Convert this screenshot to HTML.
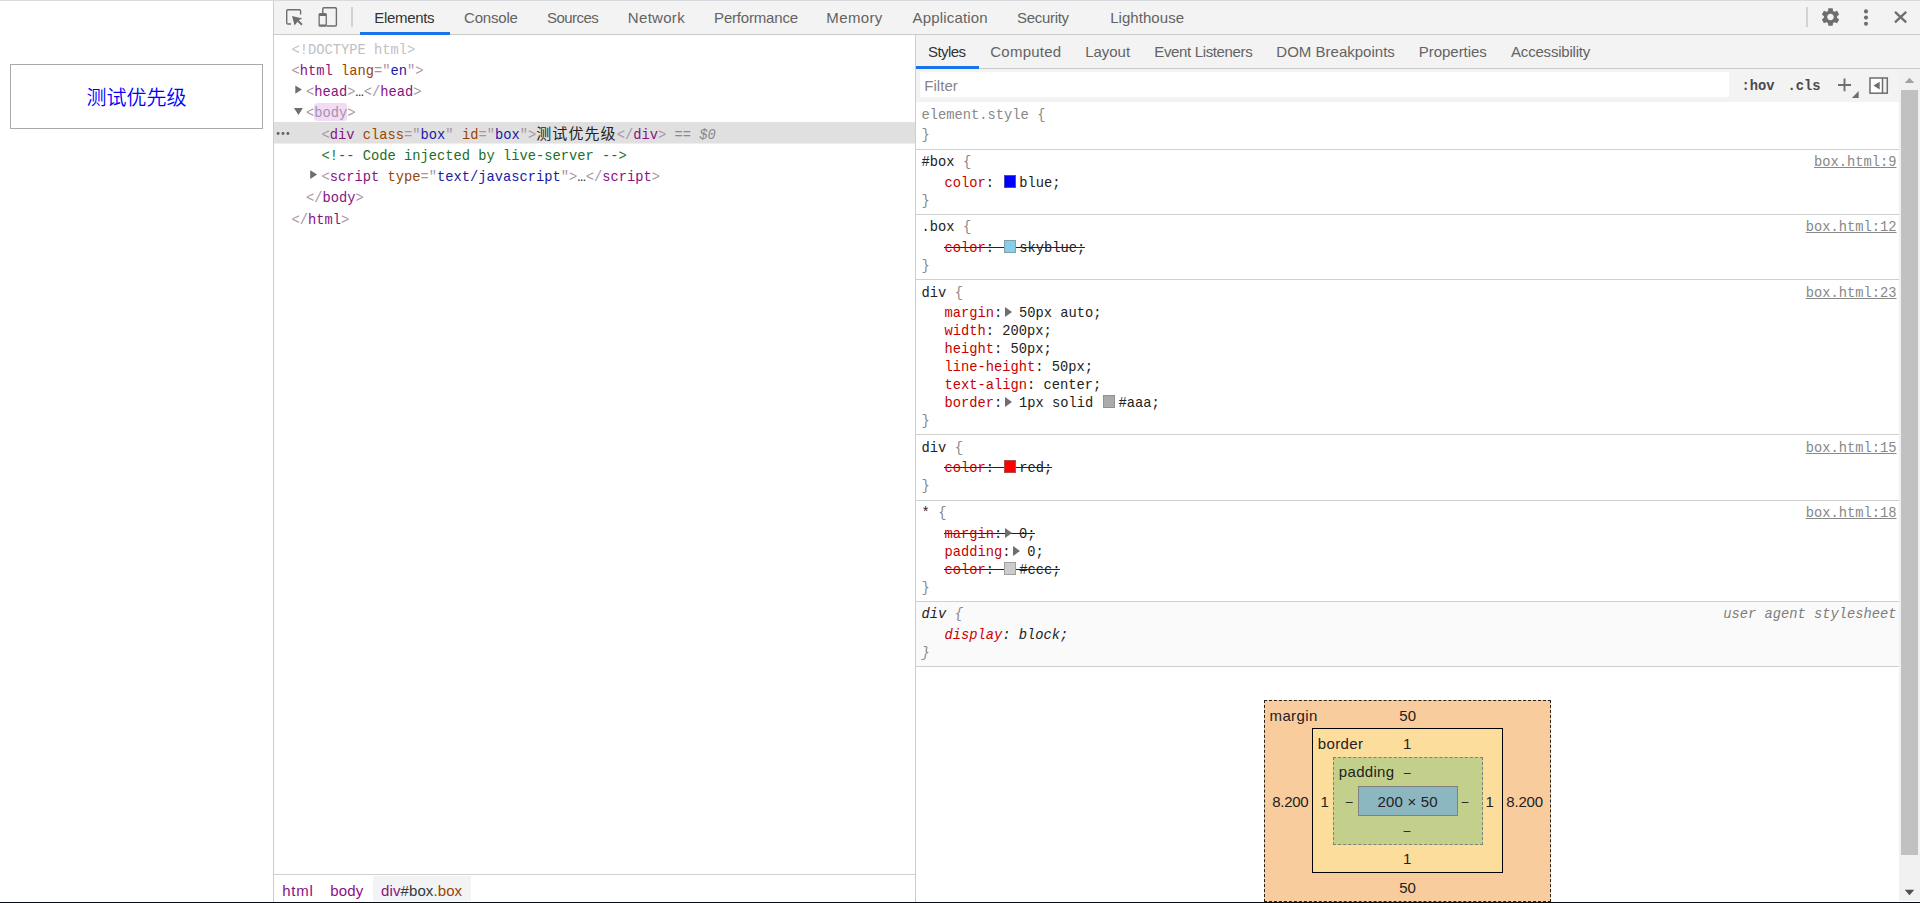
<!DOCTYPE html>
<html lang="en">
<head>
<meta charset="utf-8">
<title>box.html - DevTools</title>
<style>
html,body{margin:0;padding:0}
body{width:1920px;height:903px;overflow:hidden;background:#fff;position:relative;
 font-family:"Liberation Sans","Noto Sans CJK SC",sans-serif;font-size:15px;color:#333}
.a{position:absolute}
.bg{position:absolute}
/* sans labels */
.s{position:absolute;white-space:pre;line-height:21px;height:21px;font-size:15px;color:#636363}
/* mono text */
.m{position:absolute;white-space:pre;line-height:21px;height:21px;font-size:13.75px;
 font-family:"Liberation Mono","Noto Sans CJK SC",monospace;color:#222}
/* DOM tree colours */
.tg{color:#a894a6}.tn{color:#881280}.an{color:#994500}.av{color:#1a1aa6}
.cm{color:#236e25}.dt{color:#c0c0c0}.tx{color:#222}
/* styles pane colours */
.sel{color:#222}.br{color:#888}.pn{color:#c80000}.pv{color:#222}
.gr{color:#888}
.it{font-style:italic}
.cj{font-family:"Liberation Mono","Noto Sans CJK SC",monospace;font-size:15px;letter-spacing:1.1px;position:relative;top:0px}
.sw{display:inline-block;box-sizing:border-box;width:12px;height:13px;margin:0 3.15px 0 1.85px;
 vertical-align:-1px;border:1px solid rgba(128,128,128,.6)}
.hr{position:absolute;left:916px;width:983px;height:1px;background:#cfcfcf}
.ar{display:inline-block;width:8.5px;height:10px;position:relative}
.ar::before{content:"";position:absolute;left:2.85px;top:0;border-left:7px solid #6e6e6e;border-top:5.15px solid transparent;border-bottom:5.15px solid transparent}
.ov{background:linear-gradient(#222,#222) no-repeat 0 9px/100% 1px}
.lnk{position:absolute;white-space:pre;line-height:21px;height:21px;font-size:13.75px;
 font-family:"Liberation Mono",monospace;color:#888;text-decoration:underline;right:23.5px}
</style>
</head>
<body>

<!-- ===== inspected page (left) ===== -->
<div class="bg" style="left:0;top:0;width:273px;height:903px;background:#fff"></div>
<div class="a" id="pagebox" style="left:10px;top:64px;width:251px;height:63px;border:1px solid #aaa;
 text-align:center;line-height:66px;font-size:20px;color:#00f;font-weight:350;
 font-family:'Liberation Sans','Noto Sans CJK SC',sans-serif">测试优先级</div>

<!-- ===== devtools frame ===== -->
<div class="bg" style="left:273px;top:1px;width:1px;height:902px;background:#cdcdcd"></div>
<div class="bg" style="left:274px;top:1px;width:1646px;height:33px;background:#f3f3f3"></div>
<div class="bg" style="left:274px;top:34px;width:1646px;height:1px;background:#cbcbcb"></div>

<svg class="a" style="left:284px;top:7px" width="20" height="20" viewBox="0 0 20 20">
<path d="M16.6 7.4V4Q16.6 2.8 15.4 2.8H3.9Q2.7 2.8 2.7 4V15.85Q2.7 17.05 3.9 17.05H7.1" fill="none" stroke="#6e6e6e" stroke-width="1.4"/>
<path d="M8 8.9L18.4 11.4L14.8 13.3L18.6 17L17.3 18.4L13.5 14.7L10.6 18.4Z" fill="#6e6e6e"/></svg>
<svg class="a" style="left:316px;top:5px" width="24" height="24" viewBox="0 0 24 24">
<path d="M6.8 8.2V3.8Q6.8 2.7 7.9 2.7H19.3Q20.4 2.7 20.4 3.8V19.9Q20.4 21 19.3 21H10.9" fill="none" stroke="#6e6e6e" stroke-width="1.4"/>
<path fill-rule="evenodd" d="M4 8.1H9.4Q10.9 8.1 10.9 9.6V20.2Q10.9 21.7 9.4 21.7H4Q2.5 21.7 2.5 20.2V9.6Q2.5 8.1 4 8.1ZM3.8 10.9V19.4H9.6V10.9Z" fill="#6e6e6e"/></svg>
<div class="bg" style="left:351px;top:7px;width:2px;height:20px;background:#d2d2d2"></div>
<div class="bg" style="left:360px;top:32px;width:90px;height:3px;background:#1a73e8"></div>
<div class="s" style="left:374.37px;top:7.00px;letter-spacing:-0.336px;color:#333">Elements</div>
<div class="s" style="left:464.04px;top:7.00px;letter-spacing:-0.184px">Console</div>
<div class="s" style="left:546.92px;top:7.00px;letter-spacing:-0.534px">Sources</div>
<div class="s" style="left:627.87px;top:7.00px;letter-spacing:0.299px">Network</div>
<div class="s" style="left:714.07px;top:7.00px;letter-spacing:-0.187px">Performance</div>
<div class="s" style="left:826.37px;top:7.00px;letter-spacing:0.358px">Memory</div>
<div class="s" style="left:912.47px;top:7.00px;letter-spacing:0.182px">Application</div>
<div class="s" style="left:1016.92px;top:7.00px;letter-spacing:-0.282px">Security</div>
<div class="s" style="left:1110.17px;top:7.00px;letter-spacing:0.056px">Lighthouse</div>
<div class="bg" style="left:1806px;top:7px;width:2px;height:20px;background:#d2d2d2"></div>
<svg class="a" style="left:1815px;top:1px" width="100" height="33" viewBox="1815 1 100 33">
<g transform="translate(1819.5 6) scale(0.917)"><path d="M19.14 12.94c.04-.3.06-.61.06-.94 0-.32-.02-.64-.07-.94l2.03-1.58c.18-.14.23-.41.12-.61l-1.92-3.32c-.12-.22-.37-.29-.59-.22l-2.39.96c-.5-.38-1.03-.7-1.62-.94l-.36-2.54c-.04-.24-.24-.41-.48-.41h-3.84c-.24 0-.43.17-.47.41l-.36 2.54c-.59.24-1.13.57-1.62.94l-2.39-.96c-.22-.08-.47 0-.59.22L2.74 8.87c-.12.21-.08.47.12.61l2.03 1.58c-.05.3-.09.63-.09.94s.02.64.07.94l-2.03 1.58c-.18.14-.23.41-.12.61l1.92 3.32c.12.22.37.29.59.22l2.39-.96c.5.38 1.03.7 1.62.94l.36 2.54c.05.24.24.41.48.41h3.84c.24 0 .44-.17.47-.41l.36-2.54c.59-.24 1.13-.56 1.62-.94l2.39.96c.22.08.47 0 .59-.22l1.92-3.32c.12-.22.07-.47-.12-.61l-2.01-1.58zM12 15.6c-1.98 0-3.6-1.62-3.6-3.6s1.62-3.6 3.6-3.6 3.6 1.62 3.6 3.6-1.62 3.6-3.6 3.6z" fill="#6e6e6e"/></g>
<circle cx="1866" cy="11.4" r="2.05" fill="#6e6e6e"/><circle cx="1866" cy="17.6" r="2.05" fill="#6e6e6e"/><circle cx="1866" cy="23.8" r="2.05" fill="#6e6e6e"/>
<path d="M1895 11.9L1906.2 22.3M1906.2 11.9L1895 22.3" stroke="#6e6e6e" stroke-width="2.3" fill="none"/></svg>

<div class="bg" style="left:274px;top:35px;width:641px;height:839px;background:#fff"></div>
<div class="bg" style="left:274px;top:122px;width:641px;height:21px;background:#e0e0e0"></div>
<div class="bg" style="left:274px;top:143px;width:641px;height:1px;background:#eee"></div>
<div class="bg" style="left:314px;top:103px;width:33px;height:18px;border-radius:3px;background:#f3dcf3"></div>
<div class="m dt" style="left:291.40px;top:40.00px">&lt;!DOCTYPE html&gt;</div>
<div class="m " style="left:291.40px;top:61.00px"><span class="tg">&lt;</span><span class="tn">html</span> <span class="an">lang</span><span class="tg">="</span><span class="av">en</span><span class="tg">"&gt;</span></div>
<div class="m " style="left:306.00px;top:82.00px"><span class="tg">&lt;</span><span class="tn">head</span><span class="tg">&gt;</span><span class="tx">…</span><span class="tg">&lt;/</span><span class="tn">head</span><span class="tg">&gt;</span></div>
<div class="m " style="left:306.00px;top:103.00px"><span class="tg">&lt;</span><span style="color:#a592b0">body</span><span class="tg">&gt;</span></div>
<div class="m " style="left:321.50px;top:125.00px"><span class="tg">&lt;</span><span class="tn">div</span> <span class="an">class</span><span class="tg">="</span><span class="av">box</span><span class="tg">"</span> <span class="an">id</span><span class="tg">="</span><span class="av">box</span><span class="tg">"&gt;</span><span class="tx cj">测试优先级</span><span class="tg">&lt;/</span><span class="tn">div</span><span class="tg">&gt;</span><span class="it" style="color:#8a8a8a"> == $0</span></div>
<div class="m cm" style="left:321.50px;top:146.00px">&lt;!-- Code injected by live-server --&gt;</div>
<div class="m " style="left:321.50px;top:167.00px"><span class="tg">&lt;</span><span class="tn">script</span> <span class="an">type</span><span class="tg">="</span><span class="av">text/javascript</span><span class="tg">"&gt;</span><span class="tx">…</span><span class="tg">&lt;/</span><span class="tn">script</span><span class="tg">&gt;</span></div>
<div class="m " style="left:306.00px;top:188.00px"><span class="tg">&lt;/</span><span class="tn">body</span><span class="tg">&gt;</span></div>
<div class="m " style="left:291.40px;top:210.00px"><span class="tg">&lt;/</span><span class="tn">html</span><span class="tg">&gt;</span></div>
<svg class="a" style="left:274px;top:80px" width="50" height="105" viewBox="274 80 50 105">
<path d="M295.3 85.4L301.9 89.6L295.3 93.8Z" fill="#6e6e6e"/>
<path d="M294 108.1H302.9L298.45 114.9Z" fill="#6e6e6e"/>
<path d="M310.2 170.2L317.1 174.6L310.2 179Z" fill="#6e6e6e"/>
<circle cx="278.1" cy="133.5" r="1.45" fill="#5f5f5f"/><circle cx="283" cy="133.5" r="1.45" fill="#5f5f5f"/><circle cx="287.9" cy="133.5" r="1.45" fill="#5f5f5f"/></svg>

<div class="bg" style="left:274px;top:874px;width:641px;height:1px;background:#d0d0d0"></div>
<div class="bg" style="left:274px;top:875px;width:641px;height:27px;background:#fff"></div>
<div class="bg" style="left:373px;top:876px;width:98px;height:25px;background:#f1f3f4"></div>
<div class="s" style="left:282.16px;top:880.00px;letter-spacing:0.769px;color:#881280">html</div>
<div class="s" style="left:330.13px;top:880.00px;letter-spacing:0.190px;color:#881280">body</div>
<div class="s" style="left:381.07px;top:880.00px;letter-spacing:0.094px;color:#303942"><span style="color:#881280">div</span>#box<span style="color:#994500">.box</span></div>

<div class="bg" style="left:915px;top:35px;width:1px;height:867px;background:#cdcdcd"></div>
<div class="bg" style="left:916px;top:35px;width:1004px;height:33px;background:#f3f3f3"></div>
<div class="bg" style="left:916px;top:68px;width:1004px;height:1px;background:#cbcbcb"></div>
<div class="bg" style="left:916px;top:66px;width:63px;height:3px;background:#1a73e8"></div>
<div class="s" style="left:928.02px;top:41.00px;letter-spacing:-0.565px;color:#333">Styles</div>
<div class="s" style="left:990.24px;top:41.00px;letter-spacing:0.246px">Computed</div>
<div class="s" style="left:1085.17px;top:41.00px;letter-spacing:-0.019px">Layout</div>
<div class="s" style="left:1154.27px;top:41.00px;letter-spacing:-0.351px">Event Listeners</div>
<div class="s" style="left:1276.37px;top:41.00px;letter-spacing:0.007px">DOM Breakpoints</div>
<div class="s" style="left:1418.87px;top:41.00px;letter-spacing:-0.044px">Properties</div>
<div class="s" style="left:1511.07px;top:41.00px;letter-spacing:-0.202px">Accessibility</div>
<div class="bg" style="left:916px;top:69px;width:983px;height:33px;background:#f3f3f3"></div>
<div class="bg" style="left:920px;top:72px;width:809px;height:25px;background:#fff"></div>
<div class="s" style="left:924.37px;top:75.00px;letter-spacing:0.009px;color:#858585">Filter</div>
<div class="m " style="left:1741.50px;top:76.00px;font-weight:bold;color:#4a4a4a">:hov</div>
<div class="m " style="left:1787.50px;top:76.00px;font-weight:bold;color:#4a4a4a">.cls</div>
<svg class="a" style="left:1835px;top:72px" width="60" height="28" viewBox="1835 72 60 28">
<path d="M1838 85H1851M1844.5 78.6V91.2" stroke="#6e6e6e" stroke-width="1.9" fill="none"/>
<path d="M1858.7 91.1V97.9H1851.9Z" fill="#6e6e6e"/>
<rect x="1870" y="78" width="12.5" height="15.2" fill="#fff"/>
<rect x="1870" y="78" width="17.3" height="15.2" fill="none" stroke="#6e6e6e" stroke-width="1.5"/>
<path d="M1882.5 78V93.2" stroke="#6e6e6e" stroke-width="1.5"/>
<path d="M1879.7 81.8V89.4L1873.4 85.6Z" fill="#6e6e6e"/></svg>
<div class="bg" style="left:1899px;top:69px;width:21px;height:832px;background:#f1f1f1"></div>
<div class="bg" style="left:1901px;top:90px;width:17px;height:765px;background:#c1c1c1"></div>
<svg class="a" style="left:1899px;top:69px" width="21" height="832" viewBox="1899 69 21 832">
<path d="M1904.7 82.9H1914.3L1909.5 77.8Z" fill="#a3a3a3"/>
<path d="M1904.7 889.8H1914.3L1909.5 895.3Z" fill="#505050"/></svg>
<div class="m " style="left:921.60px;top:105.00px"><span class="sel"><span class="gr">element.style</span></span> <span class="br">{</span></div>
<div class="m " style="left:921.60px;top:125.00px"><span class="br">}</span></div>
<div class="hr" style="top:149px"></div>
<div class="m " style="left:921.60px;top:152.00px"><span class="sel">#box</span> <span class="br">{</span></div>
<div class="m " style="left:944.40px;top:173.00px"><span class="pn">color</span>: <span class="pv"><span class="sw" style="background:blue"></span>blue</span>;</div>
<div class="m " style="left:921.60px;top:191.00px"><span class="br">}</span></div>
<div class="lnk" style="top:152px">box.html:9</div>
<div class="hr" style="top:214px"></div>
<div class="m " style="left:921.60px;top:217.00px"><span class="sel">.box</span> <span class="br">{</span></div>
<div class="m ov" style="left:944.40px;top:238.00px"><span class="pn">color</span>: <span class="pv"><span class="sw" style="background:skyblue"></span>skyblue</span>;</div>
<div class="m " style="left:921.60px;top:256.00px"><span class="br">}</span></div>
<div class="lnk" style="top:217px">box.html:12</div>
<div class="hr" style="top:279px"></div>
<div class="m " style="left:921.60px;top:283.00px"><span class="sel">div</span> <span class="br">{</span></div>
<div class="m " style="left:944.40px;top:303.00px"><span class="pn">margin</span>:<span class="ar"></span> <span class="pv">50px auto</span>;</div>
<div class="m " style="left:944.40px;top:321.00px"><span class="pn">width</span>: <span class="pv">200px</span>;</div>
<div class="m " style="left:944.40px;top:339.00px"><span class="pn">height</span>: <span class="pv">50px</span>;</div>
<div class="m " style="left:944.40px;top:357.00px"><span class="pn">line-height</span>: <span class="pv">50px</span>;</div>
<div class="m " style="left:944.40px;top:375.00px"><span class="pn">text-align</span>: <span class="pv">center</span>;</div>
<div class="m " style="left:944.40px;top:393.00px"><span class="pn">border</span>:<span class="ar"></span> <span class="pv">1px solid <span class="sw" style="background:#aaa"></span>#aaa</span>;</div>
<div class="m " style="left:921.60px;top:411.00px"><span class="br">}</span></div>
<div class="lnk" style="top:283px">box.html:23</div>
<div class="hr" style="top:434px"></div>
<div class="m " style="left:921.60px;top:438.00px"><span class="sel">div</span> <span class="br">{</span></div>
<div class="m ov" style="left:944.40px;top:458.00px"><span class="pn">color</span>: <span class="pv"><span class="sw" style="background:red"></span>red</span>;</div>
<div class="m " style="left:921.60px;top:476.00px"><span class="br">}</span></div>
<div class="lnk" style="top:438px">box.html:15</div>
<div class="hr" style="top:500px"></div>
<div class="m " style="left:921.60px;top:503.00px"><span class="sel">*</span> <span class="br">{</span></div>
<div class="m ov" style="left:944.40px;top:524.00px"><span class="pn">margin</span>:<span class="ar"></span> <span class="pv">0</span>;</div>
<div class="m " style="left:944.40px;top:542.00px"><span class="pn">padding</span>:<span class="ar"></span> <span class="pv">0</span>;</div>
<div class="m ov" style="left:944.40px;top:560.00px"><span class="pn">color</span>: <span class="pv"><span class="sw" style="background:#ccc"></span>#ccc</span>;</div>
<div class="m " style="left:921.60px;top:578.00px"><span class="br">}</span></div>
<div class="lnk" style="top:503px">box.html:18</div>
<div class="hr" style="top:601px"></div>
<div class="bg" style="left:916px;top:602px;width:983px;height:64px;background:#fafafa"></div>
<div class="m it" style="left:921.60px;top:604.00px"><span class="sel">div</span> <span class="br">{</span></div>
<div class="m it" style="left:944.40px;top:625.00px"><span class="pn">display</span>: <span class="pv">block</span>;</div>
<div class="m it" style="left:921.60px;top:643.00px"><span class="br">}</span></div>
<div class="lnk it" style="top:604px;text-decoration:none;color:#7d7d7d">user agent stylesheet</div>
<div class="hr" style="top:666px"></div>

<div class="bg" style="left:1264px;top:700px;width:285px;height:200px;background:#f9cc9d;border:1px dashed #222"></div>
<div class="bg" style="left:1312px;top:728px;width:189px;height:143px;background:#fddd9b;border:1px solid #000"></div>
<div class="bg" style="left:1333px;top:757px;width:148px;height:86px;background:#c3d08b;border:1px dashed #808080"></div>
<div class="bg" style="left:1358px;top:786px;width:98px;height:28px;background:#8cb6c0;border:1px solid #808080"></div>
<div class="s" style="left:1269.50px;top:705.00px;letter-spacing:0.384px;color:#222">margin</div>
<div class="s" style="left:1317.83px;top:733.00px;letter-spacing:0.351px;color:#222">border</div>
<div class="s" style="left:1338.83px;top:761.00px;letter-spacing:0.308px;color:#222">padding</div>
<div class="s" style="left:1272.35px;top:791.00px;letter-spacing:-0.350px;color:#222">8.200</div>
<div class="s" style="left:1506.35px;top:791.00px;letter-spacing:-0.200px;color:#222">8.200</div>
<div class="s" style="left:1377.55px;top:791.00px;letter-spacing:0.176px;color:#222">200 × 50</div>
<div class="s" style="left:1399.35px;top:705.00px;letter-spacing:0.000px;color:#222">50</div>
<div class="s" style="left:1403.12px;top:733.00px;color:#222">1</div>
<div class="s" style="left:1403.12px;top:848.00px;color:#222">1</div>
<div class="s" style="left:1399.25px;top:877.00px;letter-spacing:0.000px;color:#222">50</div>
<div class="s" style="left:1320.62px;top:791.00px;color:#222">1</div>
<div class="s" style="left:1485.62px;top:791.00px;color:#222">1</div>
<div class="s" style="left:1403.70px;top:763px;font-size:12.5px;color:#222">–</div>
<div class="s" style="left:1403.60px;top:821px;font-size:12.5px;color:#222">–</div>
<div class="s" style="left:1345.80px;top:792px;font-size:12.5px;color:#222">–</div>
<div class="s" style="left:1461.60px;top:792px;font-size:12.5px;color:#222">–</div>

<!-- window edges -->
<div class="bg" style="left:0;top:0;width:1920px;height:1px;background:#d9dadf"></div>
<div class="bg" style="left:0;top:902px;width:1920px;height:1px;background:#050b12"></div>
</body>
</html>
